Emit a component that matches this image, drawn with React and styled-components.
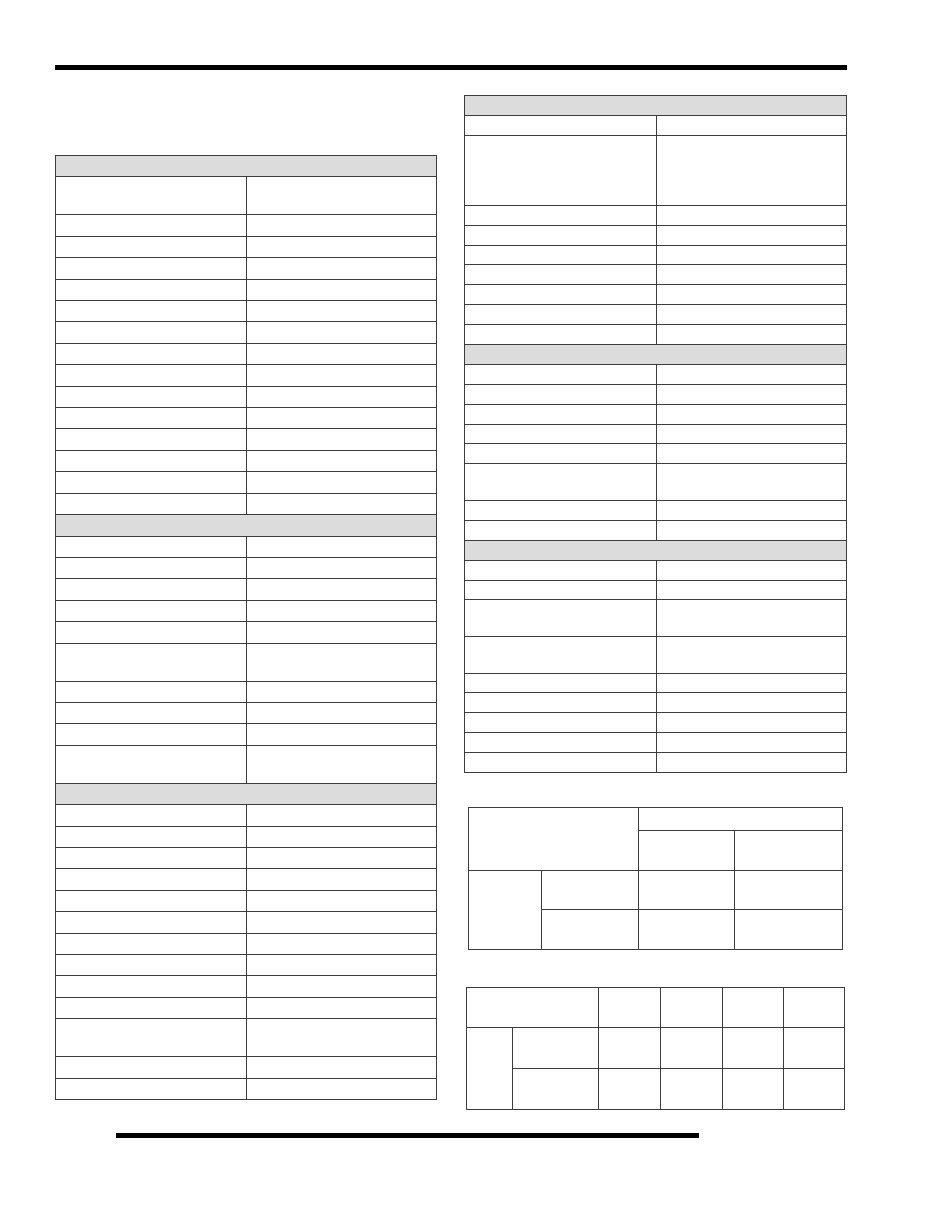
import React from "react";
import styled, { createGlobalStyle } from "styled-components";

const Global = createGlobalStyle`
  html, body { margin: 0; padding: 0; background: #fff; }
  body { font-family: "Liberation Sans", Arial, sans-serif; }
  * { box-sizing: border-box; }
`;

const Page = styled.div`
  width: 935px;
  height: 1210px;
  position: relative;
  overflow: hidden;
  background: #fff;
`;

const Rule = styled.div`
  height: 5px;
  background: #000;
  margin-left: ${(p) => p.$left}px;
  width: ${(p) => p.$width}px;
  margin-top: ${(p) => p.$top}px;
`;

const Columns = styled.div`
  display: flex;
  align-items: flex-start;
  margin-left: 55px;
  gap: 27px;
`;

const Column = styled.div`
  width: ${(p) => p.$width}px;
  padding-top: ${(p) => p.$top}px;
  display: flex;
  flex-direction: column;
`;

const Table = styled.div`
  border: 1px solid #3c3c3c;
  border-bottom: none;
  width: 100%;
  display: flex;
  flex-direction: column;
`;

const Row = styled.div`
  display: grid;
  grid-template-columns: ${(p) => p.$split}px 1fr;
  height: ${(p) => p.$h}px;
  border-bottom: 1px solid #3c3c3c;
  flex: none;
`;

const Cell = styled.div`
  & + & { border-left: 1px solid #3c3c3c; }
`;

const Header = styled.div`
  height: ${(p) => p.$h}px;
  background: #dcdcdc;
  border-bottom: 1px solid #3c3c3c;
  flex: none;
`;

const Grid = styled.div`
  display: grid;
  grid-template-columns: ${(p) => p.$cols};
  grid-template-rows: ${(p) => p.$rows};
  border-left: 1px solid #3c3c3c;
  border-top: 1px solid #3c3c3c;
  margin-left: ${(p) => p.$ml}px;
  margin-top: ${(p) => p.$mt}px;
  width: fit-content;
`;

const GCell = styled.div`
  border-right: 1px solid #3c3c3c;
  border-bottom: 1px solid #3c3c3c;
  grid-column: ${(p) => p.$c || "auto"};
  grid-row: ${(p) => p.$r || "auto"};
`;

const LR = 21.42;
const LT = 38;
const leftSpec = [
  ["h"], ["t"], ...Array(14).fill(["r"]),
  ["h"], ...Array(5).fill(["r"]), ["t"], ...Array(3).fill(["r"]), ["t"],
  ["h"], ...Array(10).fill(["r"]), ["t"], ["r"], ["r"],
];

const RR = 19.9;
const rightSpec = [
  ["h"], ["r"], ["x"], ...Array(7).fill(["r"]),
  ["h"], ...Array(5).fill(["r"]), ["t"], ["r"], ["r"],
  ["h"], ["r"], ["r"], ["t"], ["t"], ...Array(5).fill(["r"]),
];

function SpecTable({ spec, row, tall, xtall, split }) {
  return (
    <Table>
      {spec.map(([k], i) => {
        if (k === "h") return <Header key={i} $h={row} />;
        const h = k === "t" ? tall : k === "x" ? xtall : row;
        return (
          <Row key={i} $h={h} $split={split}>
            <Cell />
            <Cell />
          </Row>
        );
      })}
    </Table>
  );
}

export default function App() {
  return (
    <Page>
      <Global />
      <Rule $left={55} $width={792} $top={65} />
      <Columns>
        <Column $width={382} $top={85}>
          <SpecTable spec={leftSpec} row={LR} tall={LT} split={190} />
        </Column>
        <Column $width={383} $top={25}>
          <SpecTable spec={rightSpec} row={RR} tall={36.6} xtall={70} split={191} />
          <Grid $cols="73px 97px 96px 108px" $rows="23px 40px 39px 40px" $ml={4} $mt={34}>
            <GCell $c="1 / 3" $r="1 / 3" />
            <GCell $c="3 / 5" $r="1" />
            <GCell $c="3" $r="2" />
            <GCell $c="4" $r="2" />
            <GCell $c="1" $r="3 / 5" />
            <GCell $c="2" $r="3" />
            <GCell $c="3" $r="3" />
            <GCell $c="4" $r="3" />
            <GCell $c="2" $r="4" />
            <GCell $c="3" $r="4" />
            <GCell $c="4" $r="4" />
          </Grid>
          <Grid $cols="46px 86px 62px 62px 61px 61px" $rows="40px 41px 41px" $ml={2} $mt={37}>
            <GCell $c="1 / 3" $r="1" />
            <GCell $c="3" $r="1" />
            <GCell $c="4" $r="1" />
            <GCell $c="5" $r="1" />
            <GCell $c="6" $r="1" />
            <GCell $c="1" $r="2 / 4" />
            <GCell $c="2" $r="2" />
            <GCell $c="3" $r="2" />
            <GCell $c="4" $r="2" />
            <GCell $c="5" $r="2" />
            <GCell $c="6" $r="2" />
            <GCell $c="2" $r="3" />
            <GCell $c="3" $r="3" />
            <GCell $c="4" $r="3" />
            <GCell $c="5" $r="3" />
            <GCell $c="6" $r="3" />
          </Grid>
        </Column>
      </Columns>
      <Rule $left={116} $width={583} $top={23} />
    </Page>
  );
}
